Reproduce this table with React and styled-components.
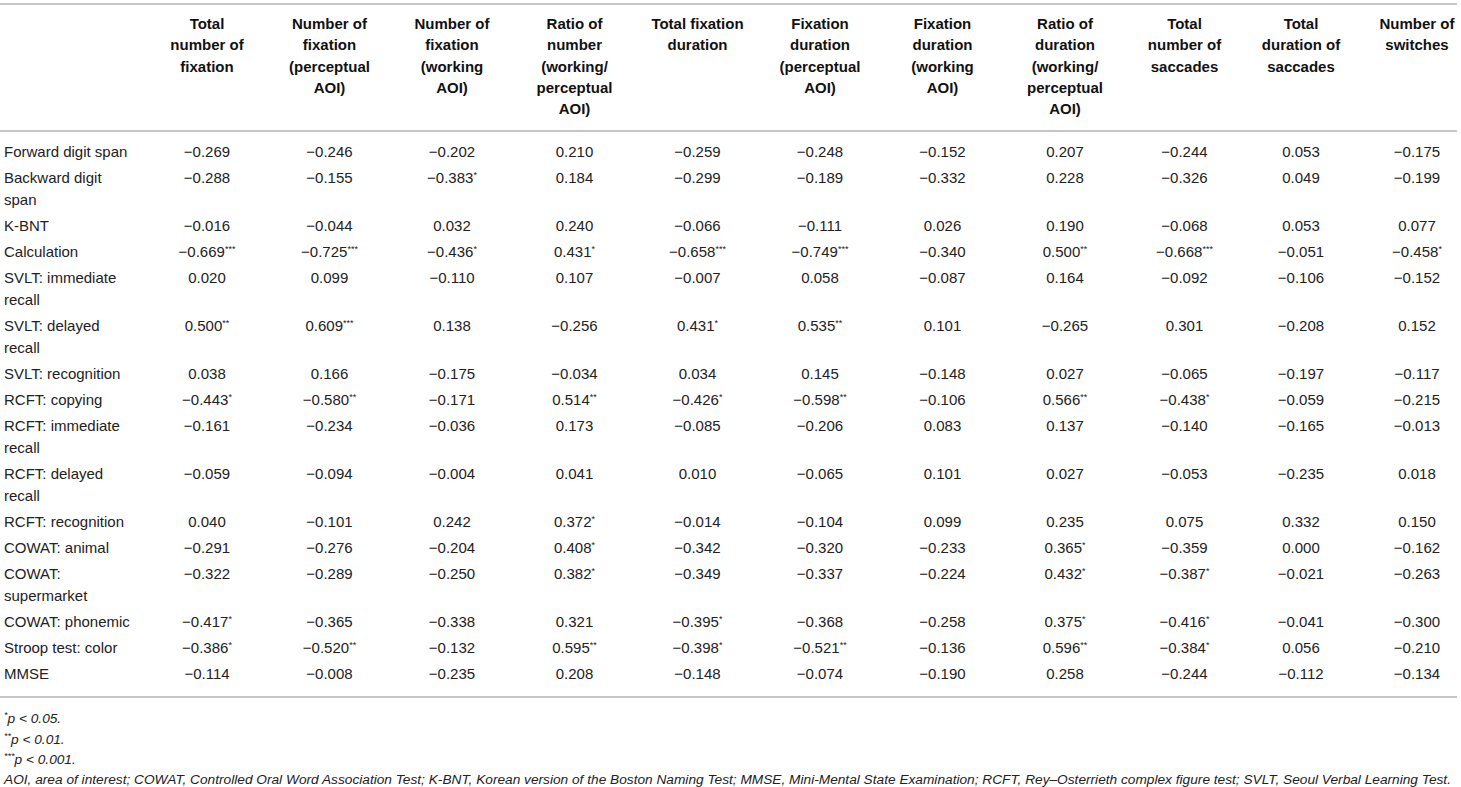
import React from 'react';
import styled, { createGlobalStyle } from 'styled-components';

const GlobalStyle = createGlobalStyle`
  html, body {
    margin: 0;
    padding: 0;
    background: #fff;
    overflow: hidden;
  }
  body {
    font-family: 'Liberation Sans', Arial, Helvetica, sans-serif;
    color: #222;
  }
`;

const Page = styled.div`
  width: 1461px;
  height: 787px;
  padding-top: 3px;
  box-sizing: border-box;
`;

const Table = styled.table`
  width: 1457px;
  table-layout: fixed;
  border-collapse: collapse;
  font-size: 15px;
`;

const HeadRow = styled.tr`
  border-top: 2px solid #c6c6c6;
  border-bottom: 2px solid #c6c6c6;
`;

const HeadCell = styled.th`
  vertical-align: top;
  text-align: center;
  font-weight: bold;
  color: #111;
  line-height: 21.3px;
  padding: 8px 0 11px ${(p) => (p.$last ? '18px' : '0')};
`;

const Body = styled.tbody`
  border-bottom: 2px solid #c6c6c6;
`;

const rowPad = (p) =>
  `${p.$first ? '9px' : '2px'} 0 ${p.$end ? '11px' : '2px'}`;

const LabelCell = styled.td`
  vertical-align: top;
  text-align: left;
  padding: ${rowPad} 4px;
  line-height: 22px;
  color: #222;
`;

const ValueCell = styled.td`
  vertical-align: top;
  text-align: center;
  padding: ${rowPad} ${(p) => (p.$last ? '18px' : '0')};
  line-height: 22px;
  color: #222;
  white-space: nowrap;
`;

const Stars = styled.sup`
  font-size: 9px;
  line-height: 0;
  vertical-align: 5px;
`;

const Notes = styled.div`
  padding: 11px 0 0 4px;
  font-style: italic;
  font-size: 13.7px;
  line-height: 20.3px;
  color: #222;
`;

const NoteLine = styled.div`
  white-space: nowrap;
`;

const widths = [146, 122, 123, 122, 123, 123, 122, 123, 122, 117, 116, 98];

const headers = [
  ['Total', 'number of', 'fixation'],
  ['Number of', 'fixation', '(perceptual', 'AOI)'],
  ['Number of', 'fixation', '(working', 'AOI)'],
  ['Ratio of', 'number', '(working/', 'perceptual', 'AOI)'],
  ['Total fixation', 'duration'],
  ['Fixation', 'duration', '(perceptual', 'AOI)'],
  ['Fixation', 'duration', '(working', 'AOI)'],
  ['Ratio of', 'duration', '(working/', 'perceptual', 'AOI)'],
  ['Total', 'number of', 'saccades'],
  ['Total', 'duration of', 'saccades'],
  ['Number of', 'switches'],
];

const rows = [
  [['Forward digit span'], '−0.269 −0.246 −0.202 0.210 −0.259 −0.248 −0.152 0.207 −0.244 0.053 −0.175'],
  [['Backward digit', 'span'], '−0.288 −0.155 −0.383* 0.184 −0.299 −0.189 −0.332 0.228 −0.326 0.049 −0.199'],
  [['K-BNT'], '−0.016 −0.044 0.032 0.240 −0.066 −0.111 0.026 0.190 −0.068 0.053 0.077'],
  [['Calculation'], '−0.669*** −0.725*** −0.436* 0.431* −0.658*** −0.749*** −0.340 0.500** −0.668*** −0.051 −0.458*'],
  [['SVLT: immediate', 'recall'], '0.020 0.099 −0.110 0.107 −0.007 0.058 −0.087 0.164 −0.092 −0.106 −0.152'],
  [['SVLT: delayed', 'recall'], '0.500** 0.609*** 0.138 −0.256 0.431* 0.535** 0.101 −0.265 0.301 −0.208 0.152'],
  [['SVLT: recognition'], '0.038 0.166 −0.175 −0.034 0.034 0.145 −0.148 0.027 −0.065 −0.197 −0.117'],
  [['RCFT: copying'], '−0.443* −0.580** −0.171 0.514** −0.426* −0.598** −0.106 0.566** −0.438* −0.059 −0.215'],
  [['RCFT: immediate', 'recall'], '−0.161 −0.234 −0.036 0.173 −0.085 −0.206 0.083 0.137 −0.140 −0.165 −0.013'],
  [['RCFT: delayed', 'recall'], '−0.059 −0.094 −0.004 0.041 0.010 −0.065 0.101 0.027 −0.053 −0.235 0.018'],
  [['RCFT: recognition'], '0.040 −0.101 0.242 0.372* −0.014 −0.104 0.099 0.235 0.075 0.332 0.150'],
  [['COWAT: animal'], '−0.291 −0.276 −0.204 0.408* −0.342 −0.320 −0.233 0.365* −0.359 0.000 −0.162'],
  [['COWAT:', 'supermarket'], '−0.322 −0.289 −0.250 0.382* −0.349 −0.337 −0.224 0.432* −0.387* −0.021 −0.263'],
  [['COWAT: phonemic'], '−0.417* −0.365 −0.338 0.321 −0.395* −0.368 −0.258 0.375* −0.416* −0.041 −0.300'],
  [['Stroop test: color'], '−0.386* −0.520** −0.132 0.595** −0.398* −0.521** −0.136 0.596** −0.384* 0.056 −0.210'],
  [['MMSE'], '−0.114 −0.008 −0.235 0.208 −0.148 −0.074 −0.190 0.258 −0.244 −0.112 −0.134'],
];

function Value({ text }) {
  const i = text.indexOf('*');
  if (i < 0) return text;
  return (
    <>
      {text.slice(0, i)}
      <Stars>{text.slice(i)}</Stars>
    </>
  );
}

function Lines({ lines }) {
  return lines.map((l, i) => (
    <React.Fragment key={i}>
      {i > 0 && <br />}
      {l}
    </React.Fragment>
  ));
}

export default function App() {
  return (
    <Page>
      <GlobalStyle />
      <Table>
        <colgroup>
          {widths.map((w, i) => (
            <col key={i} style={{ width: w }} />
          ))}
        </colgroup>
        <thead>
          <HeadRow>
            <HeadCell />
            {headers.map((h, i) => (
              <HeadCell key={i} $last={i === headers.length - 1}>
                <Lines lines={h} />
              </HeadCell>
            ))}
          </HeadRow>
        </thead>
        <Body>
          {rows.map(([label, vals], r) => {
            const first = r === 0;
            const end = r === rows.length - 1;
            return (
              <tr key={r}>
                <LabelCell $first={first} $end={end}>
                  <Lines lines={label} />
                </LabelCell>
                {vals.split(' ').map((v, c) => (
                  <ValueCell key={c} $first={first} $end={end} $last={c === 10}>
                    <Value text={v} />
                  </ValueCell>
                ))}
              </tr>
            );
          })}
        </Body>
      </Table>
      <Notes>
        <NoteLine><Stars>*</Stars>p &lt; 0.05.</NoteLine>
        <NoteLine><Stars>**</Stars>p &lt; 0.01.</NoteLine>
        <NoteLine><Stars>***</Stars>p &lt; 0.001.</NoteLine>
        <NoteLine>
          AOI, area of interest; COWAT, Controlled Oral Word Association Test; K-BNT, Korean version of the Boston Naming Test; MMSE, Mini-Mental State Examination; RCFT, Rey–Osterrieth complex figure test; SVLT, Seoul Verbal Learning Test.
        </NoteLine>
      </Notes>
    </Page>
  );
}
